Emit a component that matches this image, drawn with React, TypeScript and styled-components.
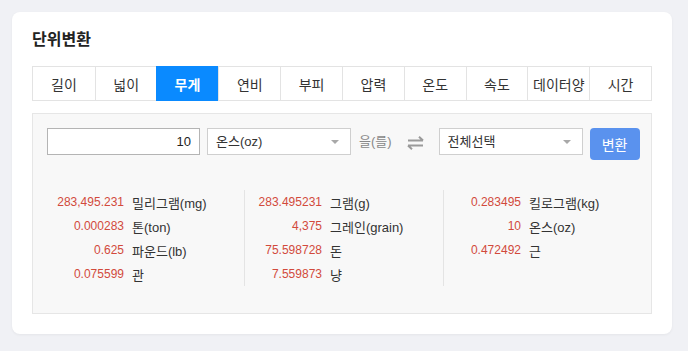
import { FC, useState } from 'react';
import styled, { createGlobalStyle } from 'styled-components';

const GlobalStyle = createGlobalStyle`
  html, body {
    margin: 0;
    padding: 0;
    background: #f0f1f5;
    font-family: "Liberation Sans", "Noto Sans CJK KR", sans-serif;
    color: #333;
  }
  * { box-sizing: border-box; }
`;

const Page = styled.div`
  padding: 12px 16px 16px 12px;
`;

const Card = styled.section`
  width: 660px;
  background: #fff;
  border-radius: 8px;
  padding: 18px 20px 20px;
  box-shadow: 0 1px 3px rgba(0, 0, 0, 0.05);
`;

const Title = styled.h2`
  margin: 0 0 16px;
  font-size: 16px;
  line-height: 20px;
  font-weight: 600;
  color: #222;
`;

const Tabs = styled.div`
  display: grid;
  grid-template-columns: repeat(10, 1fr);
  border: 1px solid #e3e3e3;
  height: 35px;
`;

const Tab = styled.button<{ $active?: boolean }>`
  border: 0;
  border-left: 1px solid ${({ $active }) => ($active ? '#0a8aff' : '#e3e3e3')};
  margin: ${({ $active }) => ($active ? '-1px 0 -1px -1px' : '0')};
  background: ${({ $active }) => ($active ? '#0a8aff' : '#fff')};
  color: ${({ $active }) => ($active ? '#fff' : '#333')};
  font-family: inherit;
  font-size: 14px;
  font-weight: ${({ $active }) => ($active ? 600 : 400)};
  padding: 0;
  cursor: pointer;

  &:first-child {
    border-left: 0;
  }
`;

const Panel = styled.div`
  margin-top: 12px;
  background: #f8f8f8;
  border: 1px solid #e6e6e6;
  padding: 14px 10px 27px 14px;
`;

const FormRow = styled.div`
  display: flex;
  align-items: flex-start;

  & > * {
    flex: none;
  }
`;

const NumberInput = styled.input`
  width: 153px;
  height: 27px;
  border: 1px solid #b4b4b4;
  background: #fff;
  text-align: right;
  padding: 0 8px;
  font-family: inherit;
  font-size: 13px;
  color: #222;
  outline: none;
`;

const Select = styled.div<{ $ml: number }>`
  position: relative;
  width: 144px;
  height: 27px;
  margin-left: ${({ $ml }) => $ml}px;
  border: 1px solid #cfcfcf;
  background: #fff;
  padding: 0 8px;
  font-size: 13px;
  line-height: 25px;
  color: #333;

  &::after {
    content: '';
    position: absolute;
    right: 11px;
    top: 11px;
    border-left: 4px solid transparent;
    border-right: 4px solid transparent;
    border-top: 4px solid #a8a8a8;
  }
`;

const Particle = styled.span`
  margin-left: 8px;
  font-size: 13px;
  line-height: 27px;
  color: #888;
  white-space: nowrap;
`;

const SwapIcon = styled.svg`
  margin: 8px 15px 0 15px;
`;

const ConvertButton = styled.button`
  margin-left: 7px;
  width: 50px;
  height: 32px;
  border: 0;
  border-radius: 4px;
  background: #5a92ee;
  color: #fff;
  font-family: inherit;
  font-size: 14px;
  cursor: pointer;
`;

const Results = styled.div`
  display: grid;
  grid-template-columns: 197px 199px 1fr;
  margin-top: 30px;
`;

const Column = styled.div<{ $divider?: boolean }>`
  border-left: ${({ $divider }) => ($divider ? '1px solid #e4e4e4' : '0')};
`;

const ResultRow = styled.div`
  display: flex;
  align-items: center;
  height: 24px;
`;

const Value = styled.span`
  width: 77px;
  text-align: right;
  font-size: 12px;
  color: #d24a3c;
`;

const Unit = styled.span`
  margin-left: 8px;
  font-size: 13px;
  color: #333;
`;

const tabs = ['길이', '넓이', '무게', '연비', '부피', '압력', '온도', '속도', '데이터양', '시간'];

const columns: Array<Array<[string, string]>> = [
  [
    ['283,495.231', '밀리그램(mg)'],
    ['0.000283', '톤(ton)'],
    ['0.625', '파운드(lb)'],
    ['0.075599', '관'],
  ],
  [
    ['283.495231', '그램(g)'],
    ['4,375', '그레인(grain)'],
    ['75.598728', '돈'],
    ['7.559873', '냥'],
  ],
  [
    ['0.283495', '킬로그램(kg)'],
    ['10', '온스(oz)'],
    ['0.472492', '근'],
  ],
];

const App: FC = () => {
  const [active, setActive] = useState(2);
  const [amount, setAmount] = useState('10');

  return (
    <>
      <GlobalStyle />
      <Page>
        <Card>
          <Title>단위변환</Title>
          <Tabs>
            {tabs.map((t, i) => (
              <Tab key={t} $active={i === active} onClick={() => setActive(i)}>
                {t}
              </Tab>
            ))}
          </Tabs>
          <Panel>
            <FormRow>
              <NumberInput value={amount} onChange={(e) => setAmount(e.target.value)} />
              <Select $ml={7}>온스(oz)</Select>
              <Particle>을(를)</Particle>
              <SwapIcon width="17" height="14" viewBox="0 0 17 14">
                <path d="M1 4.5H16M16 4.5L12 0.8M16 9.5H1M1 9.5L5 13.2" stroke="#9a9a9a" strokeWidth="2" fill="none" />
              </SwapIcon>
              <Select $ml={0}>전체선택</Select>
              <ConvertButton>변환</ConvertButton>
            </FormRow>
            <Results>
              {columns.map((col, ci) => (
                <Column key={ci} $divider={ci > 0}>
                  {col.map(([v, u]) => (
                    <ResultRow key={u}>
                      <Value>{v}</Value>
                      <Unit>{u}</Unit>
                    </ResultRow>
                  ))}
                </Column>
              ))}
            </Results>
          </Panel>
        </Card>
      </Page>
    </>
  );
};

export default App;
